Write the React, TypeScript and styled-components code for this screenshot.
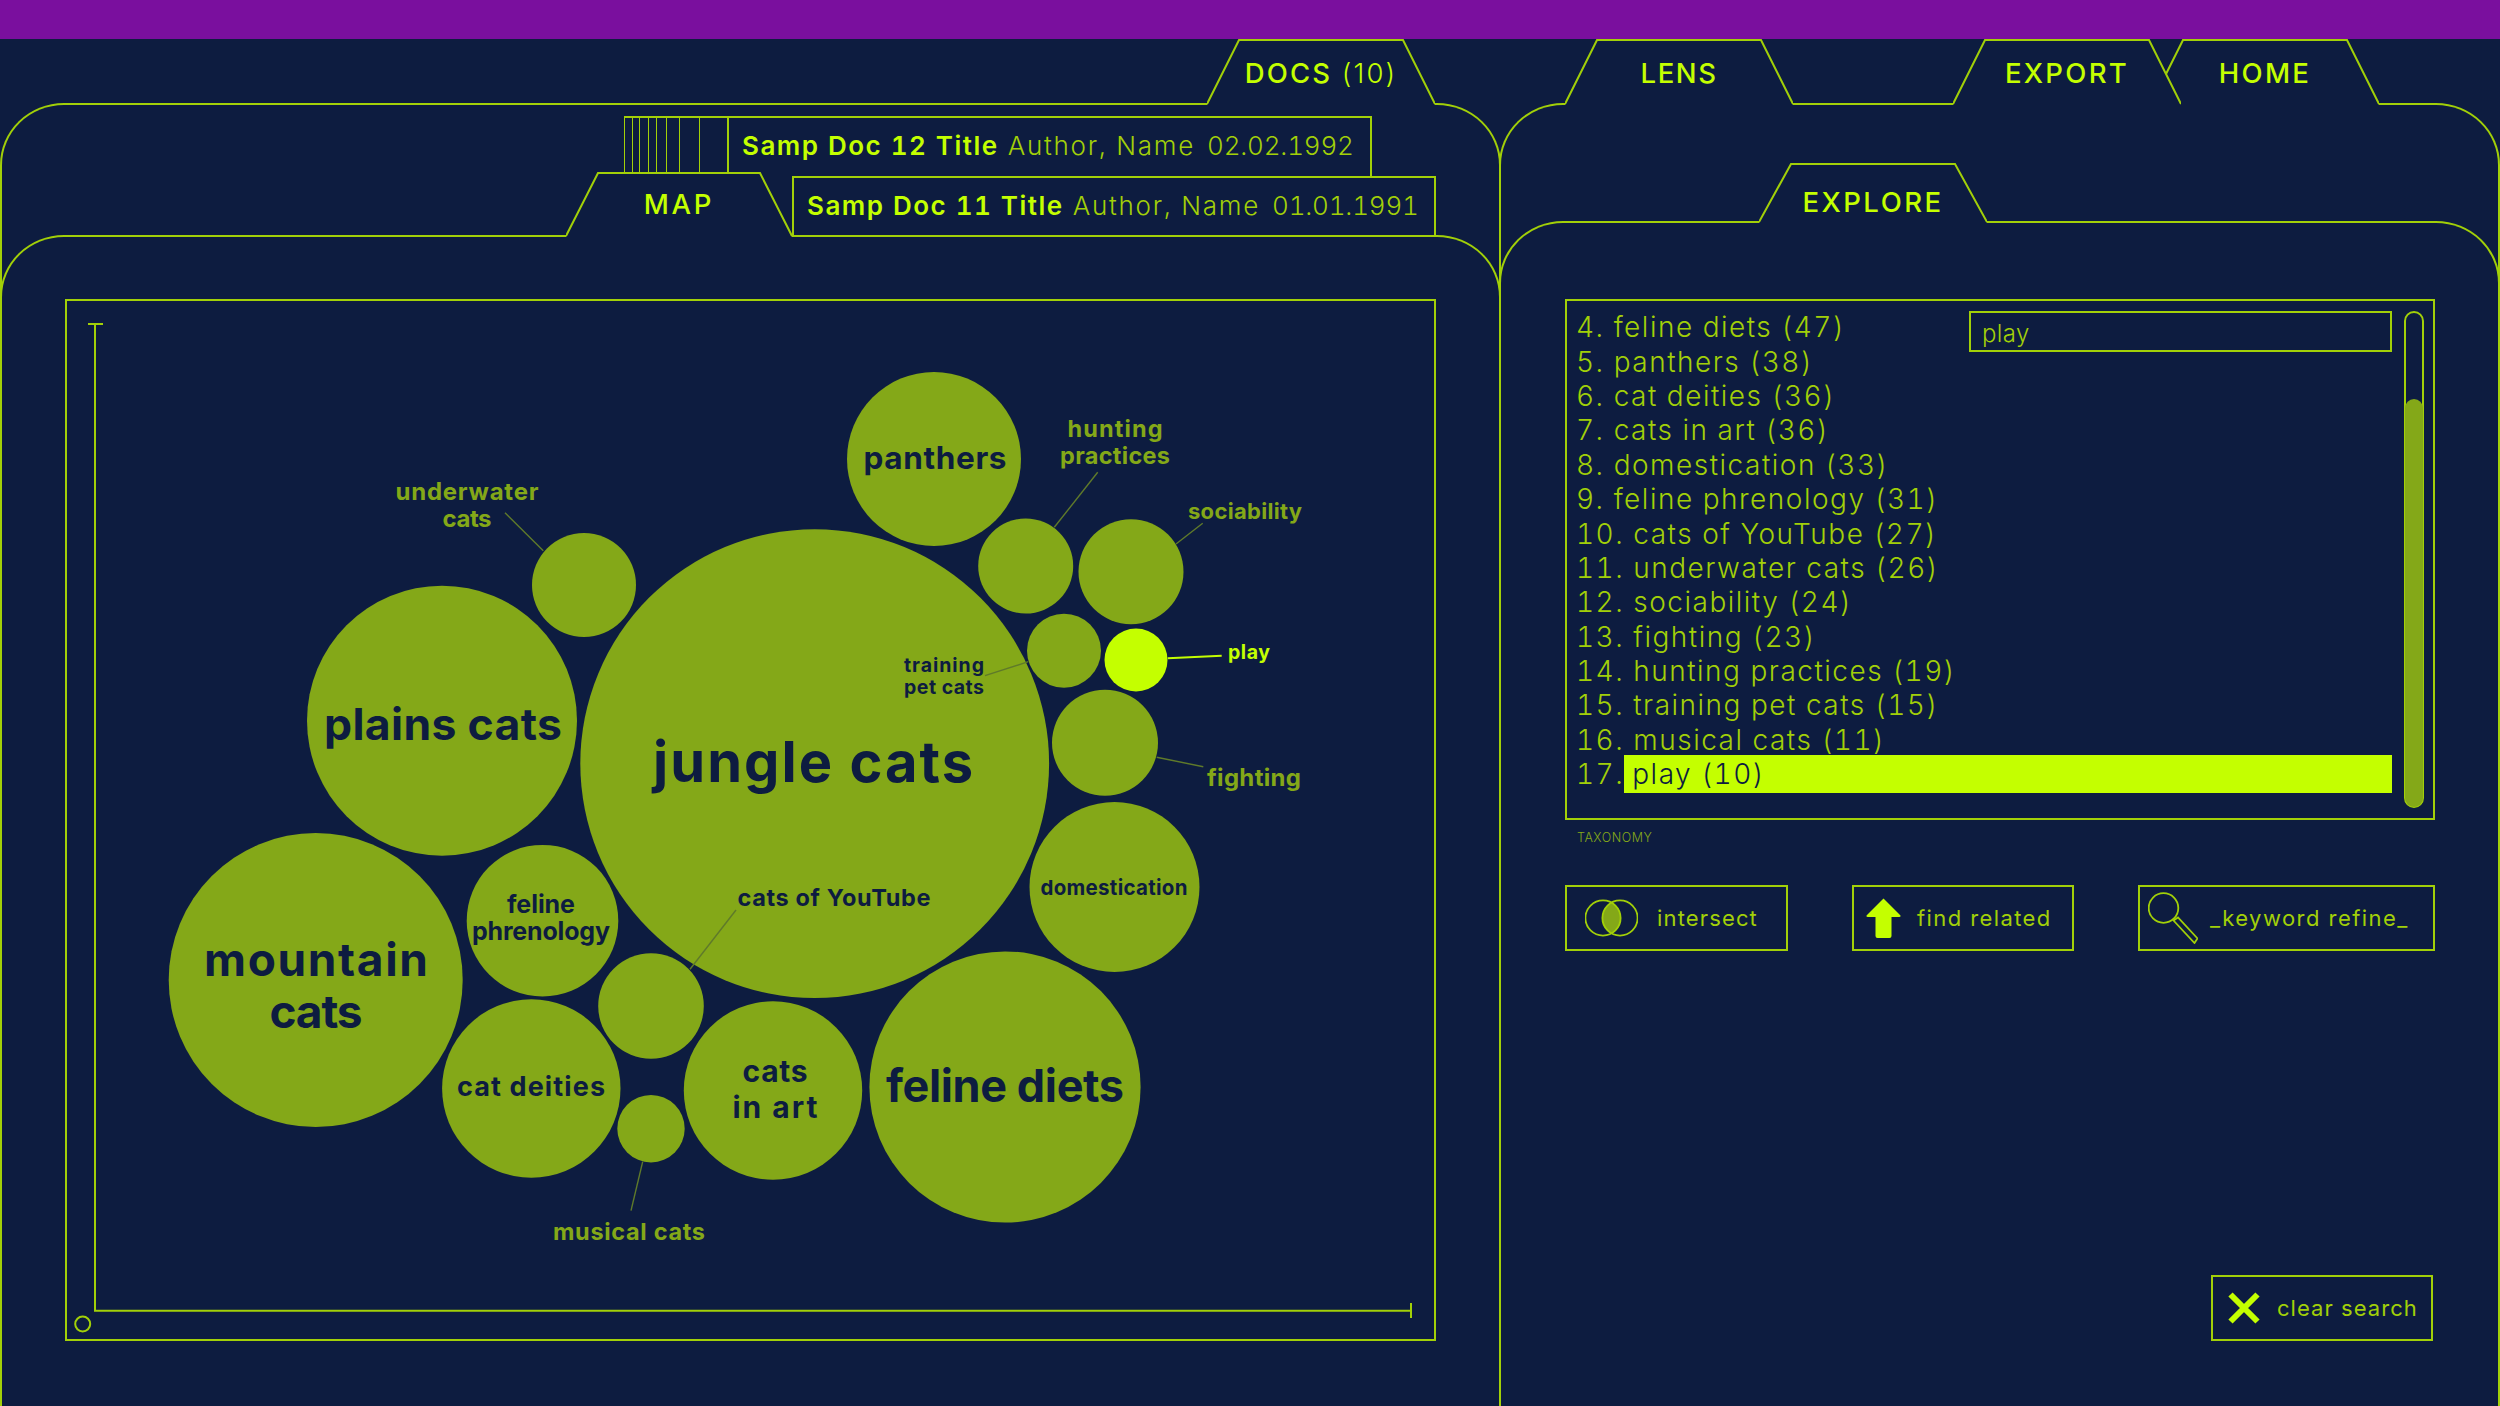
import React from "react";
import styled, { createGlobalStyle } from "styled-components";

const NAVY = "#0d1c40";
const PURPLE = "#7a0f9e";
const LIME = "#c4ff00";
const LINE = "#a2d008";
const OLIVE = "#84a818";
const DIM = "#5f7a2a";
const FONT = `Inter, "Liberation Sans", sans-serif`;

const GlobalStyle = createGlobalStyle`
  html, body {
    margin: 0;
    padding: 0;
    background: ${NAVY};
    font-family: ${FONT};
  }
  * {
    box-sizing: border-box;
  }
`;

const Page = styled.div`
  width: 2500px;
  height: 1406px;
  overflow: hidden;
  display: flex;
  flex-direction: column;
  background: ${NAVY};
`;

const TopBar = styled.div`
  height: 39px;
  flex: none;
  background: ${PURPLE};
`;

const Workspace = styled.div`
  flex: 1;
  display: grid;
  grid-template-columns: 1499px 1001px;
`;

const Column = styled.div<{ $left?: boolean }>`
  display: flex;
  flex-direction: column;
  min-width: 0;
  margin-right: ${(p) => (p.$left ? "-2px" : "0")};
`;

const TabStrip = styled.div<{ $height: number; $padLeft?: number; $padRight?: number }>`
  height: ${(p) => p.$height}px;
  flex: none;
  display: flex;
  align-items: flex-end;
  padding-left: ${(p) => p.$padLeft ?? 0}px;
  padding-right: ${(p) => p.$padRight ?? 0}px;
`;

const Panel = styled.div<{ $nested?: boolean }>`
  flex: 1;
  min-height: 0;
  display: flex;
  flex-direction: column;
  border: 2px solid ${LINE};
  border-bottom: 0;
  border-radius: 64px 64px 0 0 / 62px 62px 0 0;
  margin: ${(p) => (p.$nested ? "0 -2px" : "0")};
`;

const TabBox = styled.div<{ $width: number; $height: number; $gap?: number; $top?: boolean; $drop?: number }>`
  position: relative;
  flex: none;
  width: ${(p) => p.$width}px;
  height: ${(p) => p.$height}px;
  margin-bottom: -2px;
  margin-left: ${(p) => p.$gap ?? 0}px;
  padding-top: ${(p) => p.$drop ?? 1}px;
  z-index: ${(p) => (p.$top ? 3 : 2)};
  display: flex;
  align-items: center;
  justify-content: center;
`;

const TabOutline = styled.svg`
  position: absolute;
  inset: 0;
  display: block;
`;

const TabLabel = styled.span<{ $spacing: number }>`
  position: relative;
  font-size: 27.5px;
  font-weight: 500;
  line-height: 1;
  color: ${LIME};
  letter-spacing: ${(p) => p.$spacing}px;
  white-space: nowrap;
`;

const TabCount = styled.span`
  font-weight: 300;
`;

const Tab = ({
  width,
  height,
  inset,
  gap,
  top,
  drop,
  spacing,
  children,
}: {
  width: number;
  height: number;
  inset: number;
  gap?: number;
  top?: boolean;
  drop?: number;
  spacing: number;
  children: React.ReactNode;
}) => (
  <TabBox $width={width} $height={height} $gap={gap} $top={top} $drop={drop}>
    <TabOutline width={width} height={height} viewBox={`0 0 ${width} ${height}`}>
      <polygon points={`0,${height} ${inset},1 ${width - inset},1 ${width},${height}`} fill={NAVY} />
      <polyline
        points={`0,${height - 1} ${inset},1 ${width - inset},1 ${width},${height - 1}`}
        fill="none"
        stroke={LINE}
        strokeWidth="2"
      />
    </TabOutline>
    <TabLabel $spacing={spacing}>{children}</TabLabel>
  </TabBox>
);

const DocCard = styled.div`
  margin: 11px 0 0 622px;
  width: 748px;
  height: 61px;
  flex: none;
  display: flex;
  border-top: 2px solid ${LINE};
  border-right: 2px solid ${LINE};
`;

const Stripes = styled.div`
  flex: none;
  display: flex;
`;

const Stripe = styled.div<{ $width: number }>`
  width: ${(p) => p.$width}px;
  border-left: 1.5px solid ${LINE};
`;

const DocMeta = styled.div`
  flex: 1;
  border-left: 2px solid ${LINE};
  display: flex;
  align-items: center;
  padding: 0 0 4px 13px;
`;

const DocRow = styled.div`
  height: 58px;
  flex: none;
  display: flex;
  align-items: flex-end;
  padding-left: 564px;
`;

const DocCardFront = styled.div`
  width: 644px;
  height: 59px;
  flex: none;
  border-top: 2px solid ${LINE};
  border-left: 2px solid ${LINE};
  border-right: 2px solid ${LINE};
  display: flex;
  align-items: center;
  padding: 0 0 3px 13px;
`;

const DocTitle = styled.span`
  font-size: 26px;
  font-weight: 600;
  font-variant-numeric: tabular-nums;
  color: ${LIME};
  letter-spacing: 1.5px;
  white-space: nowrap;
`;

const DocInfo = styled.span<{ $gap: number; $spacing: number }>`
  font-size: 26px;
  font-weight: 300;
  font-variant-numeric: tabular-nums;
  color: ${LINE};
  letter-spacing: ${(p) => p.$spacing}px;
  margin-left: ${(p) => p.$gap}px;
  white-space: nowrap;
`;

const MapBody = styled.div`
  flex: 1;
  padding: 62px 63px 0 63px;
`;

const MapFrame = styled.div`
  width: 1371px;
  height: 1042px;
  border: 2px solid ${LINE};
`;

const MapSvg = styled.svg`
  display: block;
`;

const ExploreBody = styled.div`
  flex: 1;
  display: flex;
  flex-direction: column;
  padding: 76px 63px 0 64px;
`;

const ListFrame = styled.div`
  position: relative;
  height: 521px;
  flex: none;
  display: flex;
  border: 2px solid ${LINE};
`;

const ListColumn = styled.div`
  flex: 1;
  min-width: 0;
  padding: 9px 0 0 9px;
`;

const ListRow = styled.div`
  height: 34.4px;
  display: flex;
  align-items: center;
  font-size: 28px;
  font-weight: 300;
  font-variant-numeric: tabular-nums;
  letter-spacing: 1.5px;
  color: ${LINE};
  white-space: nowrap;
`;

const RowPick = styled.span`
  flex: 1;
  height: 38px;
  padding-left: 8px;
  display: flex;
  align-items: center;
  background: ${LIME};
  color: ${NAVY};
  font-weight: 300;
`;

const SearchBox = styled.input`
  position: absolute;
  left: 402px;
  top: 10px;
  width: 423px;
  height: 41px;
  padding: 3px 11px 0;
  border: 2px solid ${LINE};
  border-radius: 0;
  outline: none;
  background: ${NAVY};
  color: ${LINE};
  font-family: ${FONT};
  font-size: 24px;
  font-weight: 300;
  letter-spacing: 0.4px;
`;

const ScrollTrack = styled.div`
  flex: none;
  width: 20px;
  margin: 10px 9px 10px 12px;
  display: flex;
  flex-direction: column;
  justify-content: flex-end;
  border: 2px solid ${LINE};
  border-radius: 10px;
`;

const ScrollThumb = styled.div`
  height: 408px;
  margin: 0 -1px -1px;
  background: ${OLIVE};
  border-radius: 10px;
`;

const Caption = styled.div`
  margin: 10px 0 0 12px;
  height: 16px;
  font-size: 12.5px;
  line-height: 16px;
  font-weight: 300;
  letter-spacing: 0.5px;
  color: ${OLIVE};
`;

const ActionRow = styled.div`
  margin-top: 39px;
  display: flex;
  justify-content: space-between;
`;

const ActionButton = styled.div<{ $width: number; $pad: number; $gap: number; $spacing: number }>`
  flex: none;
  width: ${(p) => p.$width}px;
  height: 66px;
  display: flex;
  align-items: center;
  gap: ${(p) => p.$gap}px;
  padding-left: ${(p) => p.$pad}px;
  border: 2px solid ${LINE};
  color: ${LINE};
  font-size: 22px;
  font-weight: 400;
  letter-spacing: ${(p) => p.$spacing}px;
  white-space: nowrap;
`;

const ClearRow = styled.div`
  margin-top: 324px;
  display: flex;
  justify-content: flex-end;
  padding-right: 2px;
`;

const topics = [
  "4. feline diets (47)",
  "5. panthers (38)",
  "6. cat deities (36)",
  "7. cats in art (36)",
  "8. domestication (33)",
  "9. feline phrenology (31)",
  "10. cats of YouTube (27)",
  "11. underwater cats (26)",
  "12. sociability (24)",
  "13. fighting (23)",
  "14. hunting practices (19)",
  "15. training pet cats (15)",
  "16. musical cats (11)",
];

const stripeWidths = [8, 7, 9, 7.5, 10.5, 13, 19.5, 28.5];

const bubbles: { x: number; y: number; r: number; picked?: boolean }[] = [
  { x: 814.7, y: 763.6, r: 234.4 },
  { x: 442, y: 720.7, r: 135 },
  { x: 315.7, y: 980, r: 147 },
  { x: 542.5, y: 920.7, r: 75.8 },
  { x: 531.3, y: 1088.5, r: 89.2 },
  { x: 651, y: 1006, r: 52.8 },
  { x: 773, y: 1090.5, r: 89.2 },
  { x: 651, y: 1128.7, r: 33.7 },
  { x: 1005, y: 1087, r: 135.6 },
  { x: 1114.5, y: 887, r: 85 },
  { x: 1105, y: 742.7, r: 53 },
  { x: 1064, y: 650.7, r: 37 },
  { x: 1136, y: 660, r: 31.5, picked: true },
  { x: 1131, y: 571.7, r: 52.5 },
  { x: 1025.7, y: 566, r: 47.5 },
  { x: 934, y: 459, r: 87 },
  { x: 584, y: 585, r: 52 },
];

const leaders: { points: number[]; picked?: boolean }[] = [
  { points: [505, 512.7, 543.3, 550.7] },
  { points: [1097.7, 472.3, 1054.3, 527.3] },
  { points: [1202.7, 523.3, 1176, 544] },
  { points: [985, 675.7, 1028.3, 661.7] },
  { points: [1167.7, 658.3, 1221.7, 655.7], picked: true },
  { points: [1156.7, 757.3, 1203.3, 766.7] },
  { points: [642.7, 1161.7, 631, 1210.7] },
  { points: [736, 910, 690, 969.3] },
];

// x is the centre of the line, y the baseline, w the measured width of the line
const labels: { text: string; x: number; y: number; size: number; w: number; fill: string }[] = [
  { text: "jungle cats", x: 813, y: 782, size: 56, w: 320, fill: NAVY },
  { text: "plains cats", x: 443, y: 739.5, size: 44.5, w: 238, fill: NAVY },
  { text: "mountain", x: 316, y: 976, size: 46, w: 224, fill: NAVY },
  { text: "cats", x: 316, y: 1027.7, size: 46, w: 93, fill: NAVY },
  { text: "feline diets", x: 1005, y: 1102, size: 45, w: 238, fill: NAVY },
  { text: "panthers", x: 935, y: 468.5, size: 31.5, w: 143, fill: NAVY },
  { text: "cat deities", x: 531, y: 1095.5, size: 27, w: 148, fill: NAVY },
  { text: "feline", x: 541, y: 913, size: 25, w: 68, fill: NAVY },
  { text: "phrenology", x: 541, y: 940, size: 25, w: 138, fill: NAVY },
  { text: "cats", x: 775, y: 1081.7, size: 30, w: 65, fill: NAVY },
  { text: "in art", x: 775, y: 1117.7, size: 30, w: 85, fill: NAVY },
  { text: "cats of YouTube", x: 834, y: 906, size: 23.5, w: 193, fill: NAVY },
  { text: "domestication", x: 1114, y: 894.5, size: 20.5, w: 147, fill: NAVY },
  { text: "training", x: 944, y: 672, size: 19.5, w: 80, fill: NAVY },
  { text: "pet cats", x: 944, y: 694, size: 19.5, w: 80, fill: NAVY },
  { text: "underwater", x: 467, y: 499.7, size: 24, w: 143, fill: OLIVE },
  { text: "cats", x: 467, y: 526.7, size: 24, w: 49, fill: OLIVE },
  { text: "hunting", x: 1115, y: 437, size: 23.5, w: 95, fill: OLIVE },
  { text: "practices", x: 1115, y: 464, size: 23.5, w: 110, fill: OLIVE },
  { text: "sociability", x: 1245, y: 519, size: 22, w: 114, fill: OLIVE },
  { text: "play", x: 1249, y: 659, size: 19.5, w: 42, fill: LIME },
  { text: "fighting", x: 1254, y: 785.7, size: 24, w: 94, fill: OLIVE },
  { text: "musical cats", x: 629, y: 1240, size: 23.5, w: 152, fill: OLIVE },
];

const IntersectIcon = () => (
  <svg width="53" height="38" viewBox="0 0 53 38">
    <path d="M26.5 3.6A17.6 17.6 0 0 1 26.5 34.4A17.6 17.6 0 0 1 26.5 3.6Z" fill={OLIVE} />
    <circle cx="18" cy="19" r="17.6" fill="none" stroke={LINE} strokeWidth="1.8" />
    <circle cx="35" cy="19" r="17.6" fill="none" stroke={LINE} strokeWidth="1.8" />
  </svg>
);

const ArrowIcon = () => (
  <svg width="35" height="40" viewBox="0 0 35 40">
    <path
      d="M17.5 0.5L34.5 17.5Q35 19 33 19H25.5V38Q25.5 40 23.5 40H11.5Q9.5 40 9.5 38V19H2Q0 19 0.5 17.5Z"
      fill={LIME}
    />
  </svg>
);

const SearchIcon = () => (
  <svg width="50" height="52" viewBox="0 0 50 52">
    <circle cx="15.5" cy="16" r="14.8" fill="none" stroke={LINE} strokeWidth="1.8" />
    <path d="M25.5 28.5L30 25.5L49.5 46.5L46.5 51Z" fill="none" stroke={LINE} strokeWidth="1.8" />
  </svg>
);

const ClearIcon = () => (
  <svg width="32" height="32" viewBox="0 0 32 32">
    <path d="M2.5 2.5L29.5 29.5M29.5 2.5L2.5 29.5" fill="none" stroke={LIME} strokeWidth="6" />
  </svg>
);

const BubbleMap = () => (
  <MapSvg width="1367" height="1038" viewBox="67 301 1367 1038">
    <g fill="none" stroke={LINE} strokeWidth="2">
      <path d="M88 324H103M95 324V1310.7H1411M1411 1303V1318" />
      <circle cx="82.7" cy="1324" r="7.5" />
    </g>
    {bubbles.map((b) => (
      <circle key={`${b.x}-${b.y}`} cx={b.x} cy={b.y} r={b.r} fill={b.picked ? LIME : OLIVE} />
    ))}
    {leaders.map((l) => (
      <line
        key={l.points.join("-")}
        x1={l.points[0]}
        y1={l.points[1]}
        x2={l.points[2]}
        y2={l.points[3]}
        stroke={l.picked ? LIME : DIM}
        strokeWidth={l.picked ? 2 : 1.4}
      />
    ))}
    {labels.map((l) => (
      <text
        key={`${l.text}-${l.y}`}
        x={l.x}
        y={l.y}
        fontSize={l.size}
        fontWeight={700}
        fontFamily={FONT}
        fill={l.fill}
        textAnchor="middle"
        textLength={l.w}
        lengthAdjust="spacing"
      >
        {l.text}
      </text>
    ))}
  </MapSvg>
);

export default function App() {
  return (
    <Page>
      <GlobalStyle />
      <TopBar />
      <Workspace>
        <Column $left>
          <TabStrip $height={64} $padLeft={1207}>
            <Tab width={228} height={66} inset={32} spacing={2.15} drop={3}>
              DOCS <TabCount>(10)</TabCount>
            </Tab>
          </TabStrip>
          <Panel>
            <DocCard>
              <Stripes>
                {stripeWidths.map((w, i) => (
                  <Stripe key={i} $width={w} />
                ))}
              </Stripes>
              <DocMeta>
                <DocTitle>Samp Doc 12 Title</DocTitle>
                <DocInfo $gap={9} $spacing={1.75}>Author, Name</DocInfo>
                <DocInfo $gap={12} $spacing={-0.2}>02.02.1992</DocInfo>
              </DocMeta>
            </DocCard>
            <DocRow>
              <Tab width={226} height={65} inset={32} spacing={2.7} drop={1}>
                MAP
              </Tab>
              <DocCardFront>
                <DocTitle>Samp Doc 11 Title</DocTitle>
                <DocInfo $gap={9} $spacing={1.75}>Author, Name</DocInfo>
                <DocInfo $gap={12} $spacing={-0.2}>01.01.1991</DocInfo>
              </DocCardFront>
            </DocRow>
            <Panel $nested>
              <MapBody>
                <MapFrame>
                  <BubbleMap />
                </MapFrame>
              </MapBody>
            </Panel>
          </Panel>
        </Column>
        <Column>
          <TabStrip $height={64} $padLeft={66}>
            <Tab width={228} height={66} inset={32} spacing={1.55} drop={3}>
              LENS
            </Tab>
            <Tab width={228} height={66} inset={32} gap={160} top spacing={2.3} drop={3}>
              EXPORT
            </Tab>
            <Tab width={228} height={66} inset={32} gap={-30} spacing={2.3} drop={3}>
              HOME
            </Tab>
          </TabStrip>
          <Panel>
            <TabStrip $height={116} $padLeft={258}>
              <Tab width={228} height={60} inset={32} spacing={2.5} drop={19}>
                EXPLORE
              </Tab>
            </TabStrip>
            <Panel $nested>
              <ExploreBody>
                <ListFrame>
                  <ListColumn>
                    {topics.map((t) => (
                      <ListRow key={t}>{t}</ListRow>
                    ))}
                    <ListRow>
                      17.
                      <RowPick>play (10)</RowPick>
                    </ListRow>
                  </ListColumn>
                  <SearchBox readOnly value="play" />
                  <ScrollTrack>
                    <ScrollThumb />
                  </ScrollTrack>
                </ListFrame>
                <Caption>TAXONOMY</Caption>
                <ActionRow>
                  <ActionButton $width={223} $pad={18} $gap={19} $spacing={1.15}>
                    <IntersectIcon />
                    intersect
                  </ActionButton>
                  <ActionButton $width={222} $pad={12} $gap={16} $spacing={1.4}>
                    <ArrowIcon />
                    find related
                  </ActionButton>
                  <ActionButton $width={297} $pad={8} $gap={12} $spacing={1.45}>
                    <SearchIcon />
                    _keyword refine_
                  </ActionButton>
                </ActionRow>
                <ClearRow>
                  <ActionButton $width={222} $pad={15} $gap={17} $spacing={1.05}>
                    <ClearIcon />
                    clear search
                  </ActionButton>
                </ClearRow>
              </ExploreBody>
            </Panel>
          </Panel>
        </Column>
      </Workspace>
    </Page>
  );
}
